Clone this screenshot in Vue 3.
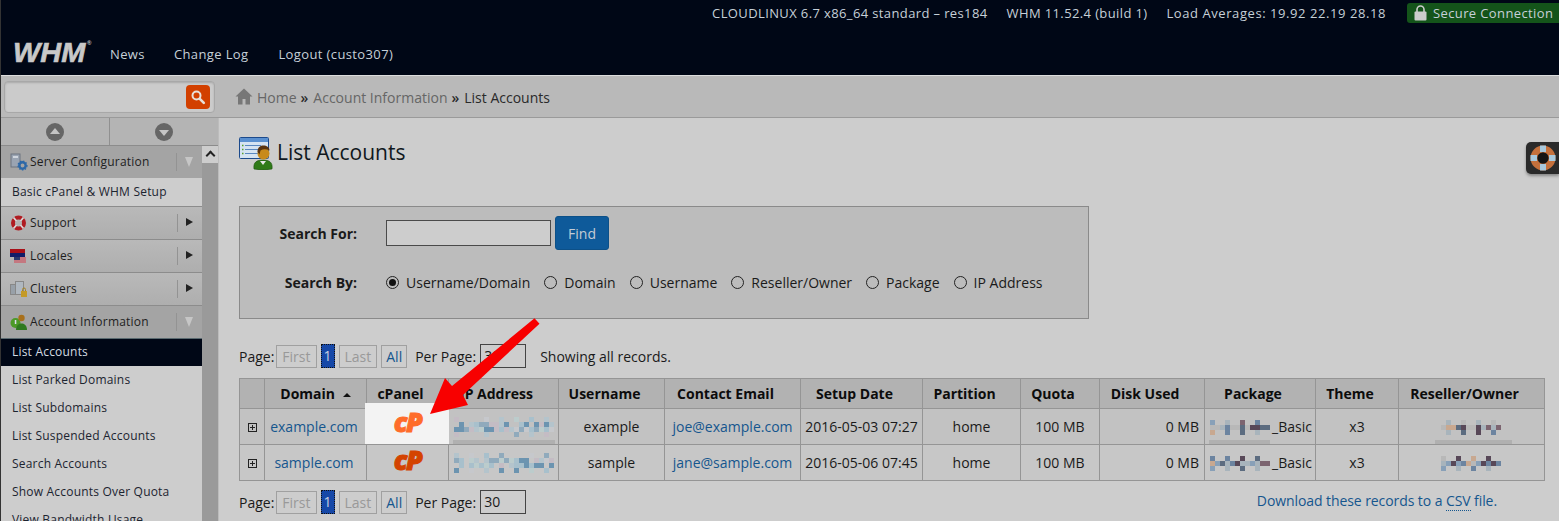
<template>
  <div class="page">
    <header class="topbar">
      <div class="sysinfo">
        <span>CLOUDLINUX 6.7 x86_64 standard – res184</span>
        <span>WHM 11.52.4 (build 1)</span>
        <span class="load">Load Averages: 19.92 22.19 28.18</span>
        <span class="secure">
          <svg width="13" height="16" viewBox="0 0 13 16">
            <path d="M3 7V4.500a3.500 3.500 0 0 1 7 0V7" fill="none" stroke="#ccc" stroke-width="1.600" />
            <rect x="0.500" y="6.500" width="12" height="9" rx="1" fill="#ccc" />
          </svg>
          Secure Connection
        </span>
      </div>
      <nav class="mainnav">
        <span class="logo"><span class="logotext">WHM</span><sup>®</sup></span>
        <a>News</a>
        <a>Change Log</a>
        <a>Logout (custo307)</a>
      </nav>
    </header>

    <div class="crumbrow">
      <div class="quicksearch">
        <div class="searchfield">
          <span class="searchbtn">
            <svg width="16" height="16" viewBox="0 0 16 16">
              <circle cx="6.500" cy="6.500" r="4" fill="none" stroke="#e8e0d8" stroke-width="2" />
              <path d="M9.800 9.800l4 4" stroke="#e8e0d8" stroke-width="2.600" stroke-linecap="round" />
            </svg>
          </span>
        </div>
      </div>
      <div class="crumbs">
        <svg class="home" width="18" height="17" viewBox="0 0 18 17">
          <path d="M9 0.500L0.500 8.500H3V16.500H7.500V11H10.500V16.500H15V8.500H17.500Z" fill="#777" />
        </svg>
        <span class="dim">Home</span><b>»</b>
        <span class="dim">Account Information</span><b>»</b>
        <span>List Accounts</span>
      </div>
    </div>

    <div class="columns">
      <aside class="sidebar">
        <div class="pager">
          <span class="roundbtn"><i class="tri up"></i></span>
          <span class="roundbtn"><i class="tri down"></i></span>
        </div>
        <div class="menuwrap">
          <div class="menu">
            <template v-for="g in menu" :key="g.label">
              <div class="group" :class="{ open: g.open }">
                <svg class="gicon" width="18" height="18" viewBox="0 0 18 18">
                  <template v-if="g.icon === 'server'">
                    <rect x="1" y="1" width="9" height="13" fill="#9aa4b2" stroke="#6c7480" />
                    <rect x="3" y="3" width="5" height="2" fill="#d0d6de" />
                    <circle cx="12.500" cy="12.500" r="3.200" fill="none" stroke="#2c68a8" stroke-width="2.400" />
                    <circle cx="12.500" cy="12.500" r="4.500" fill="none" stroke="#2c68a8" stroke-width="1.200" stroke-dasharray="1.500 1.500" />
                  </template>
                  <template v-else-if="g.icon === 'support'">
                    <circle cx="8.500" cy="9" r="5.500" fill="none" stroke="#b01c22" stroke-width="4" />
                    <path d="M3.500 3.500l3 3.500M13.500 3.500l-3 3.500M3.500 14.500l3-3.500M13.500 14.500l-3-3.500" stroke="#d8d8d8" stroke-width="1.800" />
                  </template>
                  <template v-else-if="g.icon === 'locales'">
                    <rect x="0" y="2" width="15" height="4" fill="#a81018" />
                    <rect x="0" y="6" width="15" height="4" fill="#101c68" />
                    <rect x="4" y="10" width="12" height="6" fill="#c47880" />
                    <rect x="4" y="10" width="6" height="3" fill="#28386c" />
                  </template>
                  <template v-else-if="g.icon === 'clusters'">
                    <rect x="0.500" y="4.500" width="7" height="10" fill="#98a0a8" stroke="#888" />
                    <rect x="5.500" y="1.500" width="8" height="13" fill="#b0b8c0" stroke="#888" />
                    <rect x="11" y="11" width="6" height="6" fill="#c49a28" />
                    <path d="M12.500 11V9.500a1.500 1.500 0 0 1 3 0V11" fill="none" stroke="#a88420" />
                  </template>
                  <template v-else>
                    <circle cx="5.500" cy="10" r="5" fill="#4c9a28" />
                    <rect x="4.800" y="7" width="1.500" height="4" fill="#dde" />
                    <circle cx="11.500" cy="5" r="3.200" fill="#a8701c" />
                    <path d="M6 17c0-5 3-6.500 5.500-6.500S17 12 17 17Z" fill="#2f7a20" />
                  </template>
                </svg>
                <span class="glabel">{{ g.label }}</span>
                <span class="gsep"></span>
                <i class="garrow" :class="g.open ? 'opened' : 'closed'"></i>
              </div>
              <template v-if="g.items">
                <a
                  v-for="item in g.items"
                  :key="item"
                  class="mitem"
                  :class="{ active: item === 'List Accounts', short: g.icon === 'account' }"
                >{{ item }}</a>
              </template>
            </template>
          </div>
          <div class="scrollbar">
            <span class="scrollup"></span>
          </div>
        </div>
      </aside>

      <main class="content">
        <div class="heading">
          <svg width="35" height="33" viewBox="0 0 35 33">
            <rect x="0.500" y="0.500" width="29" height="21" rx="1" fill="#d6e4f2" stroke="#1c4a8c" />
            <rect x="1" y="1" width="28" height="4" fill="#5a90d0" />
            <path d="M6 8.500H22M6 12.500H22M6 16.500H22" stroke="#5a88c0" />
            <path d="M3 8.500h1.500M3 12.500h1.500M3 16.500h1.500" stroke="#5aa028" stroke-width="1.500" />
            <path d="M15 32c-1-7 3-9 9-9s10 2 9 9q-9 2-18 0Z" fill="#2f7a18" stroke="#1c5010" stroke-width="0.600" />
            <path d="M21 24l3 4 3-4Z" fill="#e6e6e6" />
            <circle cx="24.500" cy="16.500" r="6" fill="#c88a1c" />
            <path d="M18.500 15c0-5 3-6.500 6-6.500s6 1.500 6 5q-5-2.500-9 0l-1 4Z" fill="#5a3410" />
          </svg>
          <h1>List Accounts</h1>
        </div>

        <form class="searchbox" @submit.prevent>
          <div class="sline first">
            <label class="slabel">Search For:</label>
            <input class="sinput" type="text" />
            <button class="find" type="button">Find</button>
          </div>
          <div class="sline">
            <label class="slabel">Search By:</label>
            <span v-for="(r, i) in searchBy" :key="r" class="radio">
              <i class="dot" :class="{ on: i === 0 }"></i>{{ r }}
            </span>
          </div>
        </form>

        <div class="pagination top">
          <span>Page:</span>
          <span class="pbtn off">First</span>
          <span class="pcur">1</span>
          <span class="pbtn off">Last</span>
          <span class="pbtn all">All</span>
          <span class="perpage">Per Page:</span>
          <span class="perbox">30</span>
          <span class="showing">Showing all records.</span>
        </div>

        <table class="accounts">
          <colgroup>
            <col v-for="w in colWidths" :key="w.k" :style="{ width: w.v + 'px' }" />
          </colgroup>
          <thead>
            <tr>
              <th></th>
              <th class="sorted">Domain <i class="sort"></i></th>
              <th>cPanel</th>
              <th>IP Address</th>
              <th>Username</th>
              <th>Contact Email</th>
              <th>Setup Date</th>
              <th>Partition</th>
              <th>Quota</th>
              <th>Disk Used</th>
              <th>Package</th>
              <th>Theme</th>
              <th>Reseller/Owner</th>
            </tr>
          </thead>
          <tbody>
            <tr v-for="(row, i) in rows" :key="row.domain">
              <td><i class="plus"></i></td>
              <td class="domain"><a>{{ row.domain }}</a></td>
              <td class="cp">
                <span v-if="i === 0" class="spot"><span class="cplogo bright">cP</span></span>
                <span v-else class="cplogo">cP</span>
              </td>
              <td class="blurcell">
                <svg class="mosaic" width="100" height="22" viewBox="0 0 100 22">
                  <rect v-for="(p, k) in row.ip" :key="k" :x="p.x" :y="p.y" width="5" height="5" :fill="p.c" />
                </svg>
                <i v-if="i === 0" class="redact"></i>
              </td>
              <td>{{ row.user }}</td>
              <td><a>{{ row.email }}</a></td>
              <td>{{ row.date }}</td>
              <td>home</td>
              <td>100 MB</td>
              <td class="right">0 MB</td>
              <td class="blurcell pkg">
                <svg class="mosaic" width="62" height="17" viewBox="0 0 62 17">
                  <rect v-for="(p, k) in row.pkg" :key="k" :x="p.x" :y="p.y" width="5" height="5" :fill="p.c" />
                </svg>_Basic
                <i v-if="i === 0" class="redact short"></i>
              </td>
              <td>x3</td>
              <td class="blurcell">
                <svg class="mosaic" width="62" height="17" viewBox="0 0 62 17">
                  <rect v-for="(p, k) in row.owner" :key="k" :x="p.x" :y="p.y" width="5" height="5" :fill="p.c" />
                </svg>
                <i v-if="i === 0" class="redact owner"></i>
              </td>
            </tr>
          </tbody>
        </table>

        <div class="pagination bottom">
          <span>Page:</span>
          <span class="pbtn off">First</span>
          <span class="pcur">1</span>
          <span class="pbtn off">Last</span>
          <span class="pbtn all">All</span>
          <span class="perpage">Per Page:</span>
          <span class="perbox">30</span>
          <a class="download">Download these records to a <abbr>CSV</abbr> file.</a>
        </div>
      </main>
    </div>

    <div class="helptab">
      <svg width="28" height="28" viewBox="0 0 28 28">
        <circle cx="14" cy="14" r="9" fill="none" stroke="#c4703c" stroke-width="7" />
        <path d="M14 1.500V8M14 20V26.500M1.500 14H8M20 14H26.500" stroke="#a8c8dc" stroke-width="6" />
        <circle cx="14" cy="14" r="5.500" fill="#141414" />
      </svg>
    </div>

    <!-- annotation arrow drawn over the screenshot -->
    <svg class="annot" width="1559" height="521" viewBox="0 0 1559 521">
      <path d="M534.500 318.300L539.500 323.700L463 395L468 405L430 414L445 378L452 386Z" fill="#f80000" />
    </svg>
  </div>
</template>

<script setup>
const menu = [
  { label: 'Server Configuration', icon: 'server', open: true, items: ['Basic cPanel & WHM Setup'] },
  { label: 'Support', icon: 'support' },
  { label: 'Locales', icon: 'locales' },
  { label: 'Clusters', icon: 'clusters' },
  {
    label: 'Account Information',
    icon: 'account',
    open: true,
    items: [
      'List Accounts',
      'List Parked Domains',
      'List Subdomains',
      'List Suspended Accounts',
      'Search Accounts',
      'Show Accounts Over Quota',
      'View Bandwidth Usage'
    ]
  }
]

const searchBy = ['Username/Domain', 'Domain', 'Username', 'Reseller/Owner', 'Package', 'IP Address']

const colWidths = [25, 102, 82, 110, 106, 136, 122, 98, 79, 105, 111, 83, 146].map((v, k) => ({ k, v }))

// fake pixelation for the blurred-out values
function mosaic(seed, cols, rows, palette) {
  const cells = []
  let s = seed
  for (let y = 0; y < rows; y++) {
    for (let x = 0; x < cols; x++) {
      s = (s * 9301 + 49297) % 233280
      const c = palette[Math.floor((s / 233280) * palette.length)]
      const edge = y === 0 || y === rows - 1
      if (c && !(edge && s % 3 !== 0)) cells.push({ x: x * 5, y: y * 5 + 1, c })
    }
  }
  return cells
}

const cool = [null, '#c6c8cc', '#b4c4cc', '#a8c0cc', '#90aabc', '#c4bcc4', '#6c94b0', '#bccccc']
const warm = ['#6c84a0', '#88a0b8', '#5c6c80', '#c8a890', '#7c6470', '#a8b4bc', '#b8b8b8', '#584858']

const rows = [
  {
    domain: 'example.com',
    user: 'example',
    email: 'joe@example.com',
    date: '2016-05-03 07:27',
    ip: mosaic(11, 20, 4, cool),
    pkg: mosaic(23, 12, 3, warm),
    owner: mosaic(37, 12, 3, warm)
  },
  {
    domain: 'sample.com',
    user: 'sample',
    email: 'jane@sample.com',
    date: '2016-05-06 07:45',
    ip: mosaic(53, 20, 4, cool),
    pkg: mosaic(71, 12, 3, warm),
    owner: mosaic(89, 12, 3, warm)
  }
]
</script>

<style>
html,
body {
  margin: 0;
  background: #cdcdcd;
}
</style>

<style scoped>
.page {
  position: relative;
  width: 1559px;
  height: 521px;
  overflow: hidden;
  background: #cdcdcd;
  font: 14px 'Open Sans', sans-serif;
  color: #1a1a1a;
  border-left: 1px solid #333;
  box-sizing: border-box;
}

a {
  color: #15568e;
}

/* top bar */
.topbar {
  height: 76px;
  background: #000716;
  color: #c6d0d8;
  font-size: 13px;
  letter-spacing: 0.38px;
  border-bottom: 1px solid #ddd;
  box-sizing: border-box;
}

.sysinfo {
  height: 26px;
  display: flex;
  justify-content: flex-end;
  align-items: center;
  gap: 19px;
  box-sizing: border-box;
}

.load {
  letter-spacing: 0.57px;
}

.secure {
  display: flex;
  align-items: center;
  gap: 6px;
  width: 152px;
  height: 20px;
  margin-left: 2px;
  padding-left: 7px;
  box-sizing: border-box;
  background: #14541a;
  border-radius: 3px 0 0 3px;
}

.mainnav {
  height: 49px;
  display: flex;
  align-items: center;
  padding: 6px 0 0 12px;
  box-sizing: border-box;
}

.mainnav a {
  color: #c6d0d8;
  margin-right: 30px;
}

.mainnav a:first-of-type {
  margin-right: 29px;
}

.logo {
  width: 97px;
  flex: none;
  position: relative;
  top: 0;
  font: italic 700 27px 'Liberation Sans', sans-serif;
  color: #c8c8c8;
  letter-spacing: 0;
}

.logotext {
  display: inline-block;
  transform: scaleX(1.07);
  transform-origin: left center;
  -webkit-text-stroke: 0.6px currentColor;
}

.logo sup {
  position: absolute;
  left: 74px;
  top: 2px;
  font-size: 6px;
  font-style: normal;
  line-height: 1;
}

/* breadcrumb row */
.crumbrow {
  height: 42px;
  display: flex;
  background: #b9b9b9;
  border-bottom: 1px solid #9a9a9a;
  box-sizing: border-box;
}

.quicksearch {
  width: 218px;
  padding: 5px 4px 0 3px;
  box-sizing: border-box;
}

.searchfield {
  height: 32px;
  background: #cbcbcb;
  border: 1px solid #a8a8a8;
  border-radius: 4px;
  display: flex;
  justify-content: flex-end;
  align-items: center;
  padding-right: 4px;
  box-shadow: inset 0 1px 2px #aaa;
  box-sizing: border-box;
}

.searchbtn {
  width: 24px;
  height: 24px;
  background: #d24000;
  border-radius: 4px;
  display: flex;
  align-items: center;
  justify-content: center;
}

.crumbs {
  display: flex;
  align-items: center;
  padding: 2px 0 0 16px;
  color: #2a2a2a;
}

.home {
  margin: -2px 4px 0 0;
}

.dim {
  color: #666;
}

.crumbs b {
  font-weight: 600;
  margin: 0 5px 0 4px;
}

/* sidebar */
.columns {
  display: flex;
}

.sidebar {
  width: 218px;
  flex: none;
  border-right: 1px solid #bcbcbc;
  box-sizing: border-box;
}

.pager {
  height: 28px;
  display: flex;
  background: #b4b4b4;
  border-bottom: 1px solid #8c8c8c;
  box-sizing: border-box;
}

.roundbtn {
  flex: 1;
  display: flex;
  align-items: center;
  justify-content: center;
  border-left: 1px solid #909090;
}

.roundbtn:first-child {
  flex: 0 0 108px;
  border-left: none;
}

.tri {
  width: 18px;
  height: 18px;
  border-radius: 50%;
  background: #666;
  position: relative;
}

.tri::after {
  content: '';
  position: absolute;
  left: 4px;
  border-left: 5px solid transparent;
  border-right: 5px solid transparent;
}

.tri.up::after {
  top: 5px;
  border-bottom: 6px solid #c4c4c4;
}

.tri.down::after {
  top: 7px;
  border-top: 6px solid #c4c4c4;
}

.menuwrap {
  display: flex;
  height: 376px;
}

.menu {
  width: 201px;
  flex: none;
  font-size: 12px;
  letter-spacing: 0.2px;
}

.group {
  height: 33px;
  display: flex;
  align-items: center;
  padding-left: 9px;
  background: linear-gradient(#b9b9b9, #aeaeae);
  border-bottom: 1px solid #8c8c8c;
  box-sizing: border-box;
  color: #1e1e1e;
}

.group.open {
  height: 32px;
  background: #a4a4a4;
  border-bottom: none;
}

.gicon {
  flex: none;
  margin-right: 2px;
}

.glabel {
  flex: 1;
  margin-top: -1px;
}

.gsep {
  width: 1px;
  height: 18px;
  background: #939393;
  margin-right: 8px;
}

.garrow {
  width: 0;
  height: 0;
  margin-right: 9px;
}

.garrow.closed {
  margin-top: -2px;
  border-top: 4px solid transparent;
  border-bottom: 4px solid transparent;
  border-left: 7px solid #222;
}

.garrow.opened {
  border-left: 4px solid transparent;
  border-right: 4px solid transparent;
  border-top: 10px solid #c6c6c6;
}

.mitem {
  display: block;
  height: 29px;
  line-height: 28px;
  padding-left: 11px;
  color: #1c2430;
  background: #cdcdcd;
  border-bottom: 1px solid #8c8c8c;
  box-sizing: border-box;
}

.mitem.short {
  height: 28px;
  border-bottom: none;
}

.mitem.active {
  background: #000716;
  color: #d4dce2;
  border-top: 1px solid #5a6a70;
  line-height: 25px;
}

.scrollbar {
  width: 16px;
  flex: none;
  background: #9a9a9a;
}

.scrollup {
  display: block;
  height: 17px;
  background: #cdcdcd;
  position: relative;
}

.scrollup::after {
  content: '';
  position: absolute;
  left: 5px;
  top: 6px;
  width: 5px;
  height: 5px;
  border-top: 2px solid #222;
  border-left: 2px solid #222;
  transform: rotate(45deg);
}

/* main content */
.content {
  flex: 1;
  padding: 19px 0 0 20px;
  min-width: 0;
}

.heading {
  height: 33px;
  display: flex;
  align-items: center;
  gap: 3px;
}

.heading h1 {
  margin: -4px 0 0;
  font-size: 21px;
  font-weight: 400;
  color: #101820;
}

.searchbox {
  width: 850px;
  height: 113px;
  margin-top: 36px;
  background: #bcbcbc;
  border: 1px solid #8a8a8a;
  box-sizing: border-box;
}

.sline {
  display: flex;
  align-items: center;
  height: 26px;
  margin-top: 18px;
}

.sline.first {
  margin-top: 13px;
  margin-bottom: 23px;
}

.slabel {
  width: 117px;
  margin-right: 29px;
  text-align: right;
  font-weight: 700;
}

.sinput {
  width: 165px;
  height: 26px;
  box-sizing: border-box;
  background: #cdcdcd;
  border: 1px solid #4a4a4a;
  margin: 0;
}

.find {
  width: 54px;
  height: 34px;
  margin-left: 4px;
  background: #0e5a9a;
  border: 1px solid #0c5088;
  border-radius: 3px;
  color: #c4ccd4;
  font: 14px 'Open Sans', sans-serif;
}

.radio {
  display: flex;
  align-items: center;
  margin-right: 14px;
}

.dot {
  width: 11px;
  height: 11px;
  border: 1px solid #222;
  border-radius: 50%;
  margin-right: 7px;
  position: relative;
}

.dot.on::after {
  content: '';
  position: absolute;
  left: 2px;
  top: 2px;
  width: 7px;
  height: 7px;
  border-radius: 50%;
  background: #111;
}

/* pagination */
.pagination {
  display: flex;
  align-items: center;
  height: 24px;
}

.pagination.top {
  margin-top: 25px;
}

.pagination.bottom {
  margin-top: 9px;
}

.pbtn {
  height: 23px;
  line-height: 21px;
  padding: 0 5px;
  margin-left: 2px;
  border: 1px solid #a0a0a0;
  box-sizing: border-box;
  color: #15568e;
}

.pbtn.all {
  padding: 0 4px;
}

.pbtn.off {
  color: #999;
}

.pbtn.off + .pcur {
  margin-left: 4px;
}

.pcur {
  width: 14px;
  height: 24px;
  line-height: 23px;
  text-align: center;
  background: #1648a8;
  color: #c8d0e0;
  outline: 1px dotted #111;
  outline-offset: -1px;
}

.pcur + .pbtn {
  margin-left: 4px;
}

.pbtn + .pbtn {
  margin-left: 4px;
}

.perpage {
  margin-left: 8px;
}

.perbox {
  width: 46px;
  height: 24px;
  line-height: 22px;
  margin-left: 4px;
  padding-left: 3px;
  border: 1px solid #444;
  box-sizing: border-box;
}

.showing {
  margin-left: 14px;
}

.download {
  margin: -3px 62px 0 auto;
  letter-spacing: -0.08px;
}

abbr {
  border-bottom: 1px dotted #15568e;
}

/* table */
.accounts {
  table-layout: fixed;
  width: 1305px;
  margin-top: 10px;
  border-collapse: collapse;
  border: 1px solid #959595;
}

.accounts th,
.accounts td {
  border: 1px solid #959595;
  padding: 0;
  text-align: center;
  white-space: nowrap;
}

.accounts th {
  height: 29px;
  padding-right: 14px;
  background: #b2b2b2;
  color: #0c0c0c;
  font-weight: 700;
}

.accounts th.sorted,
.accounts th:first-child {
  padding-right: 0;
}

.accounts td {
  height: 35px;
  background: #c2c2c2;
  position: relative;
}

.accounts tr:nth-child(2) td {
  background: #c7c7c7;
}

.accounts td.domain {
  padding-right: 3px;
}

.accounts td.right {
  text-align: right;
  padding-right: 5px;
}

.sort {
  display: inline-block;
  margin: 0 0 2px 4px;
  border-left: 4px solid transparent;
  border-right: 4px solid transparent;
  border-bottom: 4px solid #111;
}

.plus {
  display: inline-block;
  width: 7px;
  height: 7px;
  border: 1px solid #222;
  position: relative;
  vertical-align: 0;
}

.plus::before,
.plus::after {
  content: '';
  position: absolute;
  background: #222;
}

.plus::before {
  left: 1px;
  top: 3px;
  width: 5px;
  height: 1px;
}

.plus::after {
  left: 3px;
  top: 1px;
  width: 1px;
  height: 5px;
}

.cplogo {
  position: relative;
  top: -3px;
  font: italic 800 27px 'Open Sans', sans-serif;
  letter-spacing: -1.500px;
  color: #d44300;
  -webkit-text-stroke: 1px currentColor;
  line-height: 1;
}

.cplogo.bright {
  color: #ff6c2a;
}

/* highlighted cell sits over the table grid */
.spot {
  position: absolute;
  left: -2px;
  top: -6px;
  width: 86px;
  height: 41px;
  background: #f3f3f3;
  display: flex;
  align-items: center;
  justify-content: center;
  padding-top: 1px;
  border-right: 1px solid #ddd;
  box-sizing: border-box;
}

.mosaic {
  vertical-align: middle;
}

.pkg {
  text-align: left !important;
  padding-left: 5px !important;
}

.redact {
  position: absolute;
  left: 4px;
  bottom: 0;
  width: 102px;
  height: 4px;
  background: #b0b0b0;
}

.redact.short {
  width: 61px;
}

.redact.owner {
  left: 36px;
  width: 77px;
}

/* help tab */
.helptab {
  position: absolute;
  right: 0;
  top: 142px;
  width: 33px;
  height: 32px;
  background: #2a2a2a;
  border-radius: 5px 0 0 5px;
  display: flex;
  align-items: center;
  padding-left: 3px;
  box-sizing: border-box;
  box-shadow: 0 2px 3px #888;
}

.annot {
  position: absolute;
  left: -1px;
  top: 0;
  pointer-events: none;
}
</style>
